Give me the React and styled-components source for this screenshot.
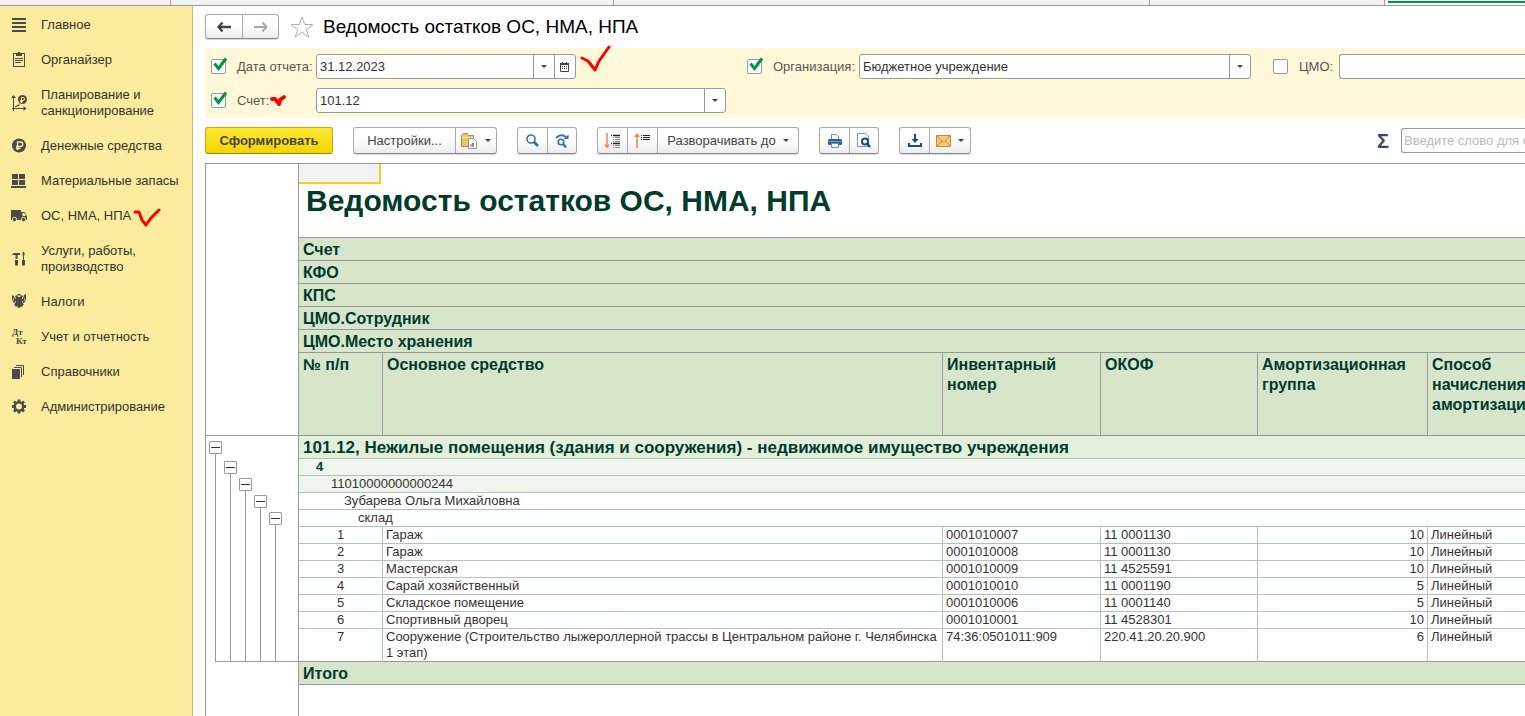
import React from 'react';
import styled, { createGlobalStyle } from 'styled-components';

const menu = [
  { icon: 'main', text: 'Главное' },
  { icon: 'organizer', text: 'Органайзер' },
  { icon: 'plan', text: 'Планирование и санкционирование' },
  { icon: 'money', text: 'Денежные средства' },
  { icon: 'stock', text: 'Материальные запасы' },
  { icon: 'truck', text: 'ОС, НМА, НПА', marked: true },
  { icon: 'tools', text: 'Услуги, работы, производство' },
  { icon: 'eagle', text: 'Налоги' },
  { icon: 'dtkt', text: 'Учет и отчетность' },
  { icon: 'books', text: 'Справочники' },
  { icon: 'gear', text: 'Администрирование' },
];

const icons = {
  main: <path d="M0 1h14v2H0zM0 5h14v2H0zM0 9h14v2H0zM0 13h14v2H0z" />,
  organizer: (
    <>
      <path d="M1 1h3v1H2v12h10V2h-2V1h3v14H1z" />
      <path d="M4 1h2V0h2v1h2v3H4zM3 6h8v1H3zM3 8h8v1H3zM3 10h6v1H3z" />
    </>
  ),
  plan: (
    <>
      <path d="M1.5 3v13M0 13.5h12" stroke="#4a4a4a" fill="none" />
      <path d="M-1 3L1.500 0 4 3zM11.500 11l3 2.500-3 2.500z" />
      <path d="M3 11.500h2v-1h2v-2" stroke="#4a4a4a" fill="none" />
      <circle cx="10.500" cy="4.500" r="4.500" />
      <path d="M9.500 8V2.500h1.500a1.400 1.400 0 0 1 0 3H8M8 6.800h3" stroke="#faec9c" fill="none" />
    </>
  ),
  money: (
    <>
      <circle cx="7" cy="7.500" r="7" />
      <path d="M5.500 12V4h3a2.200 2.200 0 0 1 0 4.500H4M4 10.500h4.500" stroke="#faec9c" strokeWidth="1.400" fill="none" />
    </>
  ),
  stock: <path d="M0 1h6v5H0zM7 1h6v5H7zM0 7h6v5H0zM7 7h6v5H7zM-1 13h15v2H-1z" />,
  truck: (
    <>
      <path d="M-1 2h10v10H-1zM9 4h3.500l2.500 4v4H9z" />
      <path d="M10.500 5h2l1.500 3h-3.500z" fill="#faec9c" />
      <circle cx="2.500" cy="11.500" r="2.200" stroke="#faec9c" />
      <circle cx="11.500" cy="11.500" r="2.200" stroke="#faec9c" />
    </>
  ),
  tools: (
    <path d="M0 3.500L2 2h6v2H5.500v4H3.500V4H1zM3 9h3v5q-1.500 1.500-3 0zM11 1h1l.7 2-.7 2v4h-1V5l-.7-2zM10 9h3v5q-1.500 1.500-3 0z" />
  ),
  eagle: (
    <>
      <path d="M6 3h2l1-2 2 1-1 2 1 1 1-4 2-1v5l-1 3-2 1 1 2-3-1-1 2 1 1-2 1-2-1 1-1-1-2-3 1 1-2-2-1-1-3V1l2 1 1 3 1-1-1-2 2-1z" />
      <path d="M5.500 0h3v1.500h-3zM3 10h8v2.500H3z" />
      <path d="M1.500 4v3M12.500 4v3M3.500 7v2M10.500 7v2" stroke="#faec9c" strokeWidth="0.600" />
    </>
  ),
  dtkt: (
    <g fontFamily="Liberation Serif, serif" fontWeight="700" fontSize="9">
      <text x="0" y="6">Дт</text>
      <text x="4" y="15">Кт</text>
    </g>
  ),
  books: (
    <>
      <path d="M0 5h8v10H0z" />
      <path d="M2 3.500h7.500V13M4 1.500h7.500V11" stroke="#4a4a4a" fill="none" />
    </>
  ),
  gear: (
    <>
      <circle cx="7" cy="7.500" r="4.200" fill="none" stroke="#4a4a4a" strokeWidth="2.400" />
      <path
        d="M7 .5v2.500M7 12v2.500M0 7.500h2.500M11.500 7.500H14M2 2.500L4 4.500M10 10.500l2 2M2 12.500l2-2M10 4.500l2-2"
        stroke="#4a4a4a"
        strokeWidth="2.800"
        fill="none"
      />
    </>
  ),
};

const headRows = ['Счет', 'КФО', 'КПС', 'ЦМО.Сотрудник', 'ЦМО.Место хранения'];
const columns = ['№ п/п', 'Основное средство', 'Инвентарный номер', 'ОКОФ', 'Амортизационная группа', 'Способ начисления амортизации'];

const assets = [
  ['Гараж', '0001010007', '11 0001130', 10],
  ['Гараж', '0001010008', '11 0001130', 10],
  ['Мастерская', '0001010009', '11 4525591', 10],
  ['Сарай хозяйственный', '0001010010', '11 0001190', 5],
  ['Складское помещение', '0001010006', '11 0001140', 5],
  ['Спортивный дворец', '0001010001', '11 4528301', 10],
  ['Сооружение (Строительство лыжероллерной трассы в Центральном районе г. Челябинска 1 этап)', '74:36:0501011:909', '220.41.20.20.900', 6],
];

// отступ сверху для каждого уровня группировки
const levels = [5, 25, 42, 59, 76];

const Caret = () => (
  <svg width="6" height="3" viewBox="0 0 6 3"><path d="M0 0h6L3 3z" fill="#444" /></svg>
);

const Check = ({ id, checked }) => (
  <CheckWrap>
    <CheckInput id={id} type="checkbox" defaultChecked={checked} />
    <CheckMark width="18" height="16" viewBox="0 0 18 16">
      <path d="M3.500 6.500L7.500 11.500 15 1.500" fill="none" stroke="#009646" strokeWidth="3" />
    </CheckMark>
  </CheckWrap>
);

const App = () => {
  return (
    <Page>
      <GlobalStyle />
      <TabStrip>
        <Tab $w={170} />
        <Tab $w={442} />
        <Tab $w={535} />
        <Tab $w={234} />
        <ActiveTab />
      </TabStrip>
      <Body>
        <Sidebar>
          {menu.map((item) => (
            <MenuItem href="#" key={item.text}>
              <MenuIcon viewBox="-1 0 16 16">{icons[item.icon]}</MenuIcon>
              <span>{item.text}</span>
              {item.marked && (
                <MenuMark width="28" height="20" viewBox="0 0 28 20">
                  <path d="M2 4l4 0 3 8 4 5 5-7 8-8" />
                </MenuMark>
              )}
            </MenuItem>
          ))}
        </Sidebar>
        <Main>
          <Header>
            <Group $h={25}>
              <Tool $w={36} aria-label="Назад">
                <svg width="14" height="12" viewBox="0 0 14 12"><path d="M5.500 1.500L1.500 6l4 4.500M2 6h12" stroke="#444" strokeWidth="2.400" fill="none" /></svg>
              </Tool>
              <Tool $w={35} aria-label="Вперед">
                <svg width="14" height="12" viewBox="0 0 14 12"><path d="M8.500 1.500l4 4.500-4 4.500M12 6H0" stroke="#aaa" strokeWidth="2" fill="none" /></svg>
              </Tool>
            </Group>
            <Star width="24" height="22" viewBox="0 0 24 22">
              <path d="M12 1l2.700 7.500H23l-6.700 5L18.800 21 12 16.300 5.200 21l2.500-7.500L1 8.500h8.300z" fill="#fff" stroke="#aab0b8" />
            </Star>
            <Title>Ведомость остатков ОС, НМА, НПА</Title>
          </Header>

          <Filters>
            <FilterRow>
              <Check id="useDate" checked />
              <FilterLabel htmlFor="date" $w={79}>Дата отчета:</FilterLabel>
              <Field $w={260}>
                <FieldInput id="date" defaultValue="31.12.2023" />
                <FieldButton aria-label="Выбрать"><Caret /></FieldButton>
                <FieldButton aria-label="Календарь">
                  <svg width="10" height="10" viewBox="0 0 10 10">
                    <path d="M.5 1.500h8v8h-8z" fill="#fff" stroke="#444" />
                    <path d="M0 1h9v2H0zM2 0h1v1H2zM6 0h1v1H6z" fill="#444" />
                    <path d="M2 4.500h5M2 6.500h5" stroke="#444" strokeDasharray="1 1" />
                  </svg>
                </FieldButton>
                <DateMark width="32" height="30" viewBox="0 0 32 30">
                  <path d="M2 14l6 3 7 9 4-9 10-14" />
                </DateMark>
              </Field>
              <OrgBlock>
                <Check id="useOrg" checked />
                <FilterLabel htmlFor="org" $w={86}>Организация:</FilterLabel>
                <Field $grow>
                  <FieldInput id="org" defaultValue="Бюджетное учреждение" />
                  <FieldButton aria-label="Выбрать"><Caret /></FieldButton>
                </Field>
              </OrgBlock>
              <CmoBlock>
                <Check id="useCmo" />
                <FilterLabel htmlFor="cmo" $w={40}>ЦМО:</FilterLabel>
                <Field $grow $open>
                  <FieldInput id="cmo" />
                </Field>
              </CmoBlock>
            </FilterRow>
            <FilterRow>
              <Check id="useAccount" checked />
              <FilterLabel htmlFor="account" $w={79}>
                Счет:
                <AccountMark width="17" height="16" viewBox="0 0 17 16">
                  <path d="M2 6l3 0 4 5 1-4 4-3" />
                </AccountMark>
              </FilterLabel>
              <Field $w={410}>
                <FieldInput id="account" defaultValue="101.12" />
                <FieldButton aria-label="Выбрать"><Caret /></FieldButton>
              </Field>
            </FilterRow>
          </Filters>

          <Toolbar>
            <SubmitButton>Сформировать</SubmitButton>
            <Group>
              <Tool $w={101}>Настройки...</Tool>
              <Tool $w={40} aria-label="Варианты отчета">
                <svg width="17" height="16" viewBox="0 0 17 16">
                  <path d="M.5 2.500l2-2h4l1 2h5v11H.5z" fill="#f0c566" stroke="#c08a2a" />
                  <path d="M1 4.500h11" stroke="#fbe7ae" />
                  <path d="M7.500 5.500h5l3 3v7h-8z" fill="#fff" stroke="#8796a5" />
                  <path d="M10 14v-3" stroke="#3a9a4a" />
                  <path d="M12 14v-4" stroke="#d8402a" strokeWidth="1.500" />
                </svg>
                <Caret />
              </Tool>
            </Group>
            <Group>
              <Tool $w={29} aria-label="Найти">
                <svg width="13" height="13" viewBox="0 0 13 13">
                  <circle cx="5" cy="5" r="4" fill="none" stroke="#2d75a8" strokeWidth="1.600" />
                  <path d="M8 8l4 4" stroke="#2d75a8" strokeWidth="2.600" />
                </svg>
              </Tool>
              <Tool $w={28} aria-label="Найти далее">
                <svg width="14" height="14" viewBox="0 0 14 14">
                  <circle cx="6" cy="8" r="2.800" fill="none" stroke="#2d75a8" strokeWidth="1.600" />
                  <path d="M8 10l3 3.500" stroke="#2d75a8" strokeWidth="2.200" />
                  <path d="M1 4q5-5 10-1" fill="none" stroke="#2d75a8" strokeWidth="2" />
                  <path d="M8.500 5H13.500V.5z" fill="#2d75a8" />
                </svg>
              </Tool>
            </Group>
            <Group>
              <Tool $w={29} aria-label="Свернуть все">
                <svg width="17" height="16" viewBox="0 0 17 16">
                  <path d="M3 0v13" stroke="#f4834f" strokeWidth="1.500" />
                  <path d="M0 11.500h6L3 15.500z" fill="#f4834f" />
                  <path d="M7 2.500h1M9 2.500h7M7 10.500h1M9 10.500h7" stroke="#222" strokeWidth="1.400" />
                  <path d="M9 4.500h1M11 4.500h5M9 6.500h1M11 6.500h5M9 8.500h1M11 8.500h5M9 12.500h1M11 12.500h5M9 14.500h1M11 14.500h5" stroke="#888" />
                </svg>
              </Tool>
              <Tool $w={29} aria-label="Развернуть все">
                <svg width="17" height="16" viewBox="0 0 17 16">
                  <path d="M3 2v13" stroke="#f4834f" strokeWidth="1.500" />
                  <path d="M0 4h6L3 0z" fill="#f4834f" />
                  <path d="M7 2.500h1M9 2.500h7M7 4.500h1M9 4.500h7M7 6.500h1M9 6.500h7" stroke="#222" strokeWidth="1.200" />
                </svg>
              </Tool>
              <Tool $w={140}>Разворачивать до<Caret /></Tool>
            </Group>
            <Group>
              <Tool $w={29} aria-label="Печать">
                <svg width="14" height="14" viewBox="0 0 14 14">
                  <path d="M3.500 5V.5h5l2 2V5" fill="#fff" stroke="#7890a8" />
                  <rect y="5" width="14" height="6" rx="1.500" fill="#2a5f8a" />
                  <path d="M1 7.500h12" stroke="#7fa3c0" />
                  <path d="M3.500 9.500h7v4h-7z" fill="#fff" stroke="#7890a8" />
                </svg>
              </Tool>
              <Tool $w={28} aria-label="Просмотр">
                <svg width="14" height="15" viewBox="0 0 14 15">
                  <path d="M.5.5h8l3 3v10H.5z" fill="#fff" stroke="#8796a5" />
                  <circle cx="8" cy="8.500" r="3" fill="#fff" stroke="#0d4f80" strokeWidth="2" />
                  <path d="M10 10.500l3 3.500" stroke="#0d4f80" strokeWidth="2.400" />
                </svg>
              </Tool>
            </Group>
            <Group>
              <Tool $w={29} aria-label="Сохранить">
                <svg width="14" height="13" viewBox="0 0 14 13">
                  <path d="M7 0v7M1 9v3h12V9" fill="none" stroke="#0d4f80" strokeWidth="2" />
                  <path d="M3.500 5h7L7 9z" fill="#0d4f80" />
                </svg>
              </Tool>
              <Tool $w={40} aria-label="Отправить">
                <svg width="15" height="12" viewBox="0 0 15 12">
                  <path d="M.5.5h14v11H.5z" fill="#f7cc7c" stroke="#c98a2c" />
                  <path d="M1 1l6.500 6L14 1M1 11l4.500-5M14 11L9.500 6" fill="none" stroke="#c98a2c" />
                </svg>
                <Caret />
              </Tool>
            </Group>
            <SumButton aria-label="Сумма">Σ</SumButton>
            <SearchInput aria-label="Поиск" placeholder="Введите слово для отбора" />
          </Toolbar>

          <Report>
            <Outline>
              <OutlineHead />
              <Tree>
                {levels.map((top) => (
                  <Branch key={top} $top={top}>
                    <Collapse aria-label="Свернуть" />
                  </Branch>
                ))}
              </Tree>
            </Outline>
            <Sheet>
              <ActiveCell />
              <Table>
                <colgroup>
                  <Col $w={84} />
                  <Col />
                  <Col $w={158} />
                  <Col $w={157} />
                  <Col $w={170} />
                  <Col $w={97} />
                </colgroup>
                <thead>
                  <tr><TitleCell colSpan={6}>Ведомость остатков ОС, НМА, НПА</TitleCell></tr>
                  {headRows.map((text) => (
                    <tr key={text}><HeadCell colSpan={6}>{text}</HeadCell></tr>
                  ))}
                  <tr>
                    {columns.map((text) => <ColumnCell key={text}>{text}</ColumnCell>)}
                  </tr>
                </thead>
                <tbody>
                  <tr><AccountCell colSpan={6}>101.12, Нежилые помещения (здания и сооружения) - недвижимое имущество учреждения</AccountCell></tr>
                  <tr><GroupCell colSpan={6} $pad={17} $tint $bold>4</GroupCell></tr>
                  <tr><GroupCell colSpan={6} $pad={32} $tint>11010000000000244</GroupCell></tr>
                  <tr><GroupCell colSpan={6} $pad={45}>Зубарева Ольга Михайловна</GroupCell></tr>
                  <tr><GroupCell colSpan={6} $pad={59}>склад</GroupCell></tr>
                  {assets.map(([name, number, okof, group], i) => (
                    <tr key={number}>
                      <Cell $align="center">{i + 1}</Cell>
                      <Cell>{name}</Cell>
                      <Cell>{number}</Cell>
                      <Cell>{okof}</Cell>
                      <Cell $align="right">{group}</Cell>
                      <Cell>Линейный</Cell>
                    </tr>
                  ))}
                </tbody>
                <tfoot>
                  <tr><HeadCell as="td" colSpan={6}>Итого</HeadCell></tr>
                </tfoot>
              </Table>
            </Sheet>
          </Report>
        </Main>
      </Body>
    </Page>
  )
}

const GlobalStyle = createGlobalStyle`
  * {
    box-sizing: border-box;
  }
  body {
    margin: 0;
    overflow: hidden;
    background: #fff;
  }
  body, button, input {
    font-family: "Liberation Sans", Arial, sans-serif;
    font-size: 13px;
    color: #333;
  }
`

const Page = styled.div`
  height: 100vh;
  display: flex;
  flex-direction: column;
  overflow: hidden;
`

const TabStrip = styled.div`
  height: 6px;
  flex: none;
  display: flex;
  background: #f2f2f2;
  border-bottom: 1px solid #999;
`

const Tab = styled.div`
  width: ${({ $w }) => $w + 1}px;
  border-right: 1px solid #999;
`

const ActiveTab = styled.div`
  flex: 1;
  background: #fff;
  padding: 1px 0 0 3px;

  &::after {
    content: '';
    display: block;
    height: 2px;
    background: #009646;
  }
`

const Body = styled.div`
  flex: 1;
  min-height: 0;
  display: flex;
`

// Меню разделов

const Sidebar = styled.nav`
  width: 193px;
  flex: none;
  display: flex;
  flex-direction: column;
  gap: 19px;
  padding: 11px 12px 0 11px;
  background: #faec9c;
  border-right: 1px solid #c8b97a;
`

const MenuItem = styled.a`
  display: flex;
  align-items: center;
  line-height: 16px;
  color: #333;
  text-decoration: none;
  margin-right: -12px;
`

const MenuIcon = styled.svg`
  width: 16px;
  height: 16px;
  flex: none;
  margin-right: 14px;
  fill: #4a4a4a;
  overflow: visible;
`

const Mark = styled.svg`
  fill: none;
  stroke: #f00;
  stroke-width: 3;
  stroke-linecap: round;
  stroke-linejoin: round;
`

const MenuMark = styled(Mark)`
  margin: 0 0 -4px 2px;
`

const Main = styled.main`
  flex: 1;
  min-width: 0;
  display: flex;
  flex-direction: column;
  padding-left: 12px;
`

const Header = styled.header`
  display: flex;
  align-items: center;
  padding: 8px 0 9px;
`

const Star = styled.svg`
  margin: 0 9px 0 11px;
`

const Title = styled.h1`
  margin: 0;
  font-size: 19px;
  line-height: 24px;
  font-weight: 400;
  color: #000;
`

// Кнопки

const Group = styled.div`
  height: ${({ $h }) => $h || 27}px;
  flex: none;
  display: flex;
  border: 1px solid #aaa;
  border-bottom-color: #888;
  border-radius: 3px;
  background: linear-gradient(#fff 40%, #ececec);
  box-shadow: 0 1px 0 #ddd;
`

const Tool = styled.button`
  box-sizing: content-box;
  width: ${({ $w }) => $w}px;
  padding: 0;
  display: flex;
  align-items: center;
  justify-content: center;
  gap: 7px;
  border: 0;
  background: none;
  color: #444;

  & + & {
    border-left: 1px solid #aaa;
  }
`

// Отборы

const Filters = styled.div`
  display: flex;
  flex-direction: column;
  gap: 9px;
  padding: 6px 0 5px 6px;
  background: #fff9da;
`

const FilterRow = styled.div`
  display: flex;
  align-items: center;
`

const CheckWrap = styled.span`
  position: relative;
  width: 15px;
  height: 15px;
  flex: none;
  margin-right: 11px;
`

const CheckInput = styled.input`
  appearance: none;
  display: block;
  width: 15px;
  height: 15px;
  margin: 0;
  border: 1px solid #999;
  border-radius: 2px;
  background: #fff;
`

const CheckMark = styled.svg`
  position: absolute;
  left: 0;
  top: -2px;
  pointer-events: none;
  visibility: hidden;

  ${CheckInput}:checked + & {
    visibility: visible;
  }
`

const FilterLabel = styled.label`
  position: relative;
  width: ${({ $w }) => $w}px;
  flex: none;
  color: #555;
`

const Field = styled.div`
  position: relative;
  width: ${({ $w }) => ($w ? $w + 'px' : 'auto')};
  flex: ${({ $grow }) => ($grow ? '1' : 'none')};
  min-width: 0;
  height: 25px;
  display: flex;
  border: 1px solid #999;
  border-radius: 3px;
  background: #fff;
  ${({ $open }) => $open && 'border-right: 0; border-radius: 3px 0 0 3px;'}
`

const FieldInput = styled.input`
  flex: 1;
  min-width: 0;
  padding: 0 3px;
  border: 0;
  outline: 0;
  background: none;
`

const FieldButton = styled.button`
  width: 21px;
  padding: 0;
  display: flex;
  align-items: center;
  justify-content: center;
  border: 0;
  border-left: 1px solid #999;
  background: none;
`

const DateMark = styled(Mark)`
  position: absolute;
  left: 263px;
  top: -11px;
`

const AccountMark = styled(Mark)`
  position: absolute;
  left: 33px;
  top: 0;
  stroke-width: 4;
`

const OrgBlock = styled.div`
  flex: 1;
  display: flex;
  align-items: center;
  margin-left: 171px;
`

const CmoBlock = styled.div`
  width: 252px;
  flex: none;
  display: flex;
  align-items: center;
  margin-left: 22px;
`

const Toolbar = styled.div`
  display: flex;
  align-items: center;
  gap: 20px;
  padding: 9px 0;
`

const SubmitButton = styled.button`
  width: 128px;
  height: 27px;
  flex: none;
  padding: 0;
  border: 1px solid #c9a800;
  border-bottom-color: #9c8400;
  border-radius: 3px;
  background: linear-gradient(#ffe733, #f5d500);
  font-weight: 700;
  color: #444;
`

const SumButton = styled.button`
  margin-left: auto;
  margin-right: -8px;
  padding: 0;
  border: 0;
  background: none;
  font-size: 20px;
  line-height: 24px;
  font-weight: 700;
  color: #34495a;
`

const SearchInput = styled.input`
  width: 124px;
  height: 25px;
  padding: 0 0 0 2px;
  border: 1px solid #999;
  border-right: 0;
  border-radius: 3px 0 0 3px;

  &::placeholder {
    color: #bbb;
  }
`

// Отчет

const Report = styled.div`
  flex: 1;
  min-height: 0;
  display: flex;
  border-top: 1px solid #999;
  border-left: 1px solid #999;
`

const Outline = styled.div`
  width: 93px;
  flex: none;
  border-right: 1px solid #999;
`

const OutlineHead = styled.div`
  height: 272px;
  border-bottom: 1px solid #999;
`

const Tree = styled.div`
  height: 226px;
  display: flex;
  margin-left: 9px;
  border-bottom: 1px solid #999;
`

const Branch = styled.div`
  width: 15px;
  display: flex;
  flex-direction: column;
  padding-top: ${({ $top }) => $top}px;

  &::after {
    content: '';
    flex: 1;
    width: 1px;
    background: #999;
  }
`

const Collapse = styled.button`
  width: 13px;
  height: 13px;
  flex: none;
  margin-left: -6px;
  padding: 0 1px;
  border: 1px solid #999;
  border-radius: 1px;
  background: #fff;

  &::before {
    content: '';
    display: block;
    height: 1px;
    background: #333;
  }
`

const Sheet = styled.div`
  position: relative;
  flex: 1;
  min-width: 0;
  overflow: hidden;
`

const ActiveCell = styled.div`
  position: absolute;
  left: 0;
  top: 0;
  width: 82px;
  height: 20px;
  border: solid #ffc81f;
  border-width: 0 2px 2px 0;
  background: #f2f2f2;
  box-shadow: inset -1px -1px 0 #fff;
`

const Table = styled.table`
  width: 100%;
  table-layout: fixed;
  border-collapse: separate;
  border-spacing: 0;
`

const Col = styled.col`
  width: ${({ $w }) => ($w ? $w + 'px' : 'auto')};
`

const TitleCell = styled.th`
  height: 74px;
  padding: 0 7px;
  border-bottom: 1px solid #999;
  text-align: left;
  font-size: 30px;
  line-height: 34px;
  color: #003c2d;
`

const HeadCell = styled.th`
  height: 23px;
  padding: 2px 4px 0;
  border-bottom: 1px solid #999;
  background: #d7e5cb;
  text-align: left;
  font-size: 16px;
  font-weight: 700;
  line-height: 20px;
  color: #003c2d;
`

const ColumnCell = styled(HeadCell)`
  height: 83px;
  vertical-align: top;
  overflow: hidden;

  &:not(:last-child) {
    border-right: 1px solid #999;
  }
`

const AccountCell = styled(HeadCell).attrs({ as: 'td' })`
  background: #e3eedb;
  border-color: #a9c6b9;
  font-size: 17px;
`

const GroupCell = styled.td`
  height: 17px;
  padding: 0 0 0 ${({ $pad }) => $pad}px;
  border-bottom: 1px solid #a9c6b9;
  background: ${({ $tint }) => ($tint ? '#eff4ed' : '#fff')};
  font-weight: ${({ $bold }) => ($bold ? 700 : 400)};
  line-height: 16px;
  ${({ $bold }) => $bold && 'color: #003c2d;'}
`

const Cell = styled.td`
  height: 17px;
  padding: 0 3px;
  border-bottom: 1px solid #a9c6b9;
  text-align: ${({ $align }) => $align || 'left'};
  vertical-align: top;
  line-height: 16px;

  &:not(:last-child) {
    border-right: 1px solid #a9c6b9;
  }

  tr:last-child > & {
    border-bottom-color: #999;
  }
`

export default App;
